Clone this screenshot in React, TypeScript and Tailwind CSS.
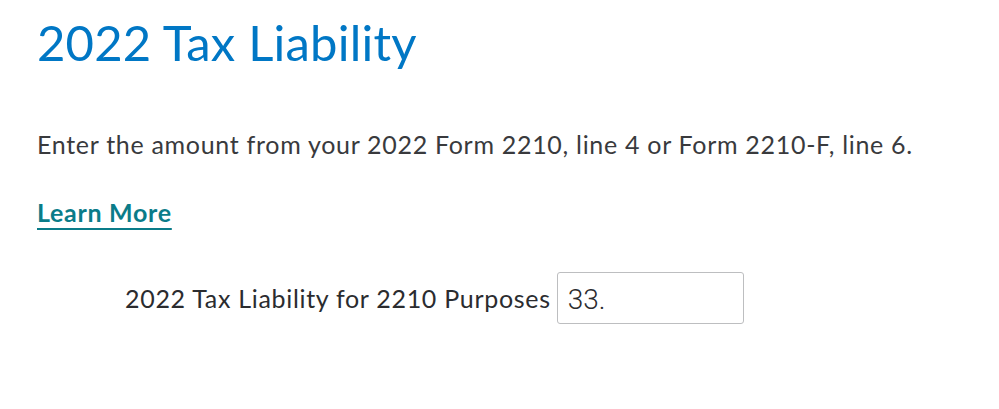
export default function App() {
  return (
    <div className="h-[409px] w-[999px] bg-white pl-[37px] font-['Lato','Noto_Sans',sans-serif] text-[25px] tracking-[0.7px] text-[#393a3d]">
      <h1 className="pt-[10px] text-[49px] leading-[64px] font-normal tracking-[0.2px] text-[#0077c5]">2022 Tax Liability</h1>
      <p className="mt-[54px] leading-[32px]">
        Enter the amount from your 2022 Form 2210, line 4 or Form 2210-F, line 6.
      </p>
      <a href="#" className="mt-[36px] inline-block leading-[32px] font-bold text-[#0a7c89] underline decoration-2 underline-offset-[6px]">
        Learn More
      </a>
      <div className="mt-[40px] flex items-center pl-[88px]">
        <label className="leading-[30px] text-[#2b2c2f]">2022 Tax Liability for 2210 Purposes</label>
        <input
          defaultValue="33."
          className="ml-[6px] h-[52px] w-[187px] rounded-[3px] border border-[#bdbec0] px-[10px] pt-[4px] font-['Roboto',sans-serif] text-[28px] font-light tracking-normal text-[#2b2c2f] outline-none"
        />
      </div>
    </div>
  )
}
